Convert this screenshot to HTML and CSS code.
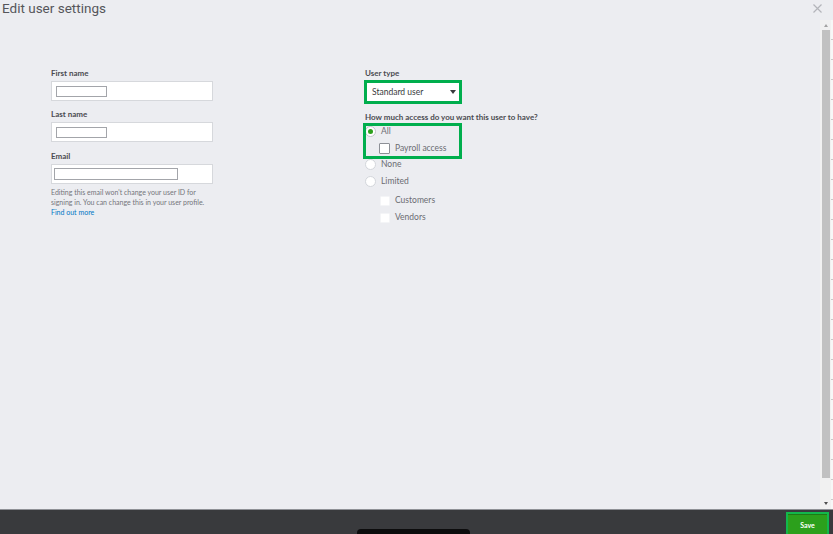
FILE: index.html
```html
<!DOCTYPE html>
<html lang="en">
<head>
    <meta charset="UTF-8">
    <meta name="viewport" content="width=device-width, initial-scale=1.0">
    <title>Edit user settings</title>
    <link rel="stylesheet" href="styles.css">
</head>
<body>
<div class="page">
    <div class="top-bar">
        <h1 class="title">Edit user settings</h1>
        <button class="close" aria-label="Close">
            <svg width="9" height="9" viewBox="0 0 9 9"><path d="M0.5 0.5L8.5 8.5M8.5 0.5L0.5 8.5" stroke="#b3b5ba" stroke-width="1.2" fill="none"/></svg>
        </button>
    </div>

    <div class="middle">
        <div class="form">
            <div class="col-left">
                <div class="field-label">First name</div>
                <div class="field"><span class="field-value short"></span></div>

                <div class="field-label">Last name</div>
                <div class="field spaced"><span class="field-value short"></span></div>

                <div class="field-label">Email</div>
                <div class="field email"><span class="field-value long"></span></div>

                <p class="help">Editing this email won't change your user ID for signing in. You can change this in your user profile.<br><a href="#" class="link">Find out more</a></p>
            </div>

            <div class="col-right">
                <div class="field-label">User type</div>
                <div class="select marked">
                    <span>Standard user</span>
                    <span class="caret"></span>
                </div>

                <div class="field-label question">How much access do you want this user to have?</div>
                <div class="access-all marked">
                    <div class="option"><span class="radio checked"></span>All</div>
                    <div class="option sub"><span class="checkbox"></span>Payroll access</div>
                </div>
                <div class="option none"><span class="radio"></span>None</div>
                <div class="option limited"><span class="radio"></span>Limited</div>
                <div class="sub-list">
                    <div class="option sub"><span class="checkbox plain"></span>Customers</div>
                    <div class="option sub"><span class="checkbox plain"></span>Vendors</div>
                </div>
            </div>
        </div>

        <div class="scrollbar">
            <div class="arrow up"></div>
            <div class="thumb"></div>
            <div class="arrow down"></div>
        </div>
        <div class="edge"></div>
    </div>

    <footer class="footer">
        <div class="pill"></div>
        <button class="save">Save</button>
    </footer>
</div>
</body>
</html>
```

FILE: styles.css
```css
body {
    margin: 0;
    background: #ecedf1;
    font-family: Lato, "Open Sans", Arial, sans-serif;
    color: #393a3d;
}

.page {
    width: 833px;
    height: 534px;
    display: flex;
    flex-direction: column;
    overflow: hidden;
}

/* header */
.top-bar {
    height: 20px;
    display: flex;
    justify-content: space-between;
    align-items: flex-start;
}

.title {
    margin: 0;
    padding-left: 2px;
    font-family: Roboto, Arial, sans-serif;
    font-weight: 400;
    font-size: 13.5px;
    line-height: 16px;
    color: #55565b;
}

.close {
    margin: 4px 11px 0 0;
    padding: 0;
    border: none;
    background: none;
    width: 9px;
    height: 9px;
    display: flex;
}

/* form area */
.middle {
    flex: 1;
    display: flex;
    min-height: 0;
}

.form {
    flex: 1;
    display: flex;
    gap: 152px;
    padding: 48px 0 0 51px;
}

.col-left {
    width: 162px;
}

.col-right {
    width: 200px;
}

.field-label {
    font-size: 8px;
    line-height: 10px;
    font-weight: 700;
    color: #4a4b50;
}

.field {
    height: 20px;
    box-sizing: border-box;
    margin: 3px 0 8px;
    background: white;
    border: 1px solid #d6d8dc;
    display: flex;
    align-items: center;
    padding-left: 4px;
}

.field.spaced {
    margin-bottom: 9px;
}

.field.email {
    padding-left: 2px;
    margin-bottom: 0;
}

.field-value {
    display: block;
    background: white;
    border: 1px solid #a3a5aa;
    box-sizing: border-box;
}

.field-value.short {
    width: 51px;
    height: 11px;
}

.field-value.long {
    width: 124px;
    height: 12px;
}

.help {
    margin: 3px 0 0;
    font-size: 7px;
    line-height: 10px;
    color: #74757b;
}

.link {
    color: #0077c5;
    text-decoration: none;
}

/* green highlight boxes */
.marked {
    outline: 3px solid #00ae4d;
    outline-offset: -1px;
}

.select {
    margin: 4px 0 0 1px;
    width: 94px;
    height: 20px;
    box-sizing: border-box;
    background: white;
    border-bottom: 1px solid #cdd0d5;
    display: flex;
    align-items: center;
    justify-content: space-between;
    padding: 0 4px 0 6px;
    font-size: 8.5px;
    color: #393a3d;
}

.caret {
    width: 0;
    height: 0;
    border-left: 3px solid transparent;
    border-right: 3px solid transparent;
    border-top: 4px solid #393a3d;
}

.question {
    margin-top: 10px;
}

.access-all {
    margin-top: 3px;
    width: 95px;
    height: 32px;
    box-sizing: border-box;
    padding-top: 1px;
    display: flex;
    flex-direction: column;
    gap: 6px;
}

.option {
    height: 11px;
    display: flex;
    align-items: center;
    gap: 5px;
    font-size: 8.5px;
    line-height: 11px;
    color: #6b6c72;
}

.option.sub {
    padding-left: 14px;
}

.option.none {
    margin-top: 1.5px;
}

.option.limited {
    margin-top: 6px;
}

.sub-list {
    margin-top: 8.5px;
    display: flex;
    flex-direction: column;
    gap: 6px;
}

.radio {
    width: 11px;
    height: 11px;
    box-sizing: border-box;
    border-radius: 50%;
    background: white;
    border: 1px solid #d3d6db;
    display: flex;
    align-items: center;
    justify-content: center;
}

.radio.checked {
    border-color: #c2c5cb;
}

.radio.checked::after {
    content: "";
    width: 5px;
    height: 5px;
    border-radius: 50%;
    background: #2ca01c;
}

.checkbox {
    width: 11px;
    height: 11px;
    box-sizing: border-box;
    background: white;
    border: 1px solid #8d9096;
    border-radius: 1px;
}

.checkbox.plain {
    width: 10px;
    height: 10px;
    margin-left: 1px;
    border-color: #f4f5f7;
}

/* scrollbar on the right */
.scrollbar {
    width: 11px;
    background: #f1f1f1;
    display: flex;
    flex-direction: column;
}

.arrow {
    height: 10px;
    display: flex;
    align-items: center;
    justify-content: center;
}

.arrow.up::after {
    content: "";
    border-left: 2.5px solid transparent;
    border-right: 2.5px solid transparent;
    border-bottom: 3px solid #a3a3a3;
}

.arrow.down {
    margin-top: auto;
    height: 11px;
}

.arrow.down::after {
    content: "";
    border-left: 2.5px solid transparent;
    border-right: 2.5px solid transparent;
    border-top: 3px solid #505050;
}

.thumb {
    margin-left: 2px;
    width: 8px;
    height: 448px;
    background: #c1c1c1;
}

.edge {
    width: 2px;
    background: repeating-linear-gradient(to bottom, #f7f7f7 0 19px, #c9c9c9 19px 20px);
}

/* footer */
.footer {
    height: 25px;
    box-sizing: border-box;
    background: #393a3d;
    border-top: 1px solid #8f9196;
    display: flex;
    align-items: flex-start;
    overflow: hidden;
}

.pill {
    margin: 19px 0 0 357px;
    width: 113px;
    height: 10px;
    background: #0c0c0d;
    border-radius: 4px;
}

.save {
    margin: 2px 4px 0 auto;
    width: 43px;
    height: 24px;
    padding: 1px 0 0;
    border: 2px solid #12b84c;
    background: #2ca01c;
    box-shadow: inset 0 1px 0 #1f7a15;
    color: white;
    font-family: Lato, Arial, sans-serif;
    font-weight: 700;
    font-size: 7px;
    line-height: 10px;
}
```
